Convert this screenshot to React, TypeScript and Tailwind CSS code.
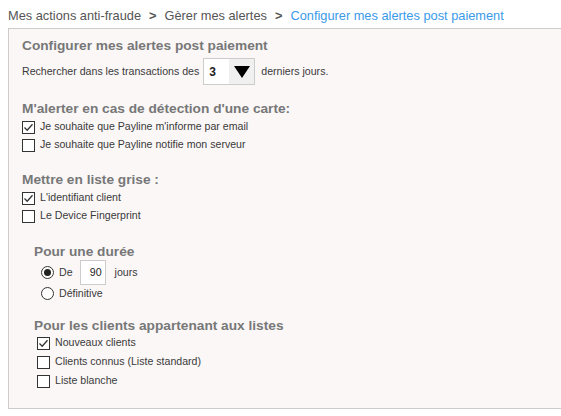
import React from "react";

const Check = ({ checked }: { checked?: boolean }) => (
  <span className="w-[13px] h-[13px] border border-[#333] bg-white flex items-center justify-center shrink-0">
    {checked && (
      <svg width="11" height="11" viewBox="0 0 11 11">
        <path d="M1.5 5.5 L4.2 8.2 L9.5 2.2" fill="none" stroke="#333" strokeWidth="1.3" />
      </svg>
    )}
  </span>
);

const Radio = ({ checked }: { checked?: boolean }) => (
  <span className="w-[13px] h-[13px] rounded-full border border-[#333] bg-white flex items-center justify-center shrink-0">
    {checked && <span className="w-[7px] h-[7px] rounded-full bg-[#222]" />}
  </span>
);

const CheckRow = ({ checked, label }: { checked?: boolean; label: string }) => (
  <div className="flex items-center gap-[5px] h-[18px]">
    <Check checked={checked} />
    <span>{label}</span>
  </div>
);

export default function App() {
  return (
    <div className="w-[561px] h-[416px] bg-white text-[10.6px] text-[#3a3a3a] overflow-hidden" style={{ fontFamily: '"Liberation Sans", Arial, sans-serif' }}>
      <div className="h-[28px] pl-[8px] pt-[6px] text-[12.8px] text-[#555] flex gap-[8px]">
        <span>Mes actions anti-fraude</span>
        <span className="font-bold">&gt;</span>
        <span>Gèrer mes alertes</span>
        <span className="font-bold">&gt;</span>
        <span className="text-[#3a9aea]">Configurer mes alertes post paiement</span>
      </div>
      <div className="ml-[8px] h-[381px] border border-r-0 border-[#cccccc] bg-[#fbf7f7] pl-[13px] pt-[8px]">
        <div className="text-[13.7px] font-bold text-[#777] leading-[17px]">Configurer mes alertes post paiement</div>
        <div className="flex items-center mt-[4px] h-[27px]">
          <span>Rechercher dans les transactions des</span>
          <div className="ml-[4px] w-[52px] h-[27px] border border-[#ccc] bg-white flex">
            <span className="flex-1 flex items-center pl-[5px] text-[12px] font-bold text-[#222]">3</span>
            <span className="w-[25px] bg-[#f0f0f0] flex items-center justify-center">
              <svg width="16" height="12" viewBox="0 0 16 12"><path d="M0 0 H16 L8 12 Z" fill="#000" /></svg>
            </span>
          </div>
          <span className="ml-[6px]">derniers jours.</span>
        </div>
        <div className="mt-[15px] text-[13.7px] font-bold text-[#777] leading-[17px]">M'alerter en cas de détection d'une carte:</div>
        <div className="mt-[1px]">
          <CheckRow checked label="Je souhaite que Payline m'informe par email" />
          <CheckRow label="Je souhaite que Payline notifie mon serveur" />
        </div>
        <div className="mt-[17px] text-[13.7px] font-bold text-[#777] leading-[17px]">Mettre en liste grise :</div>
        <div className="mt-[1px]">
          <CheckRow checked label="L'identifiant client" />
          <CheckRow label="Le Device Fingerprint" />
        </div>
        <div className="pl-[12px] mt-[18px]">
          <div className="text-[13.7px] font-bold text-[#777] leading-[17px]">Pour une durée</div>
          <div className="pl-[7px]">
            <div className="flex items-center gap-[5px] h-[25px]">
              <Radio checked />
              <span>De</span>
              <span className="ml-[2px] w-[26px] h-[25px] border border-[#ccc] bg-white flex items-center justify-end pr-[3px] text-[#222]">90</span>
              <span className="ml-[4px]">jours</span>
            </div>
            <div className="flex items-center gap-[5px] h-[17px]">
              <Radio />
              <span>Définitive</span>
            </div>
          </div>
          <div className="mt-[15px] text-[13.7px] font-bold text-[#777] leading-[17px]">Pour les clients appartenant aux listes</div>
          <div className="pl-[3px]">
            <CheckRow checked label="Nouveaux clients" />
            <div className="h-[1px]" />
            <CheckRow label="Clients connus (Liste standard)" />
            <div className="h-[1px]" />
            <CheckRow label="Liste blanche" />
          </div>
        </div>
      </div>
    </div>
  );
}
